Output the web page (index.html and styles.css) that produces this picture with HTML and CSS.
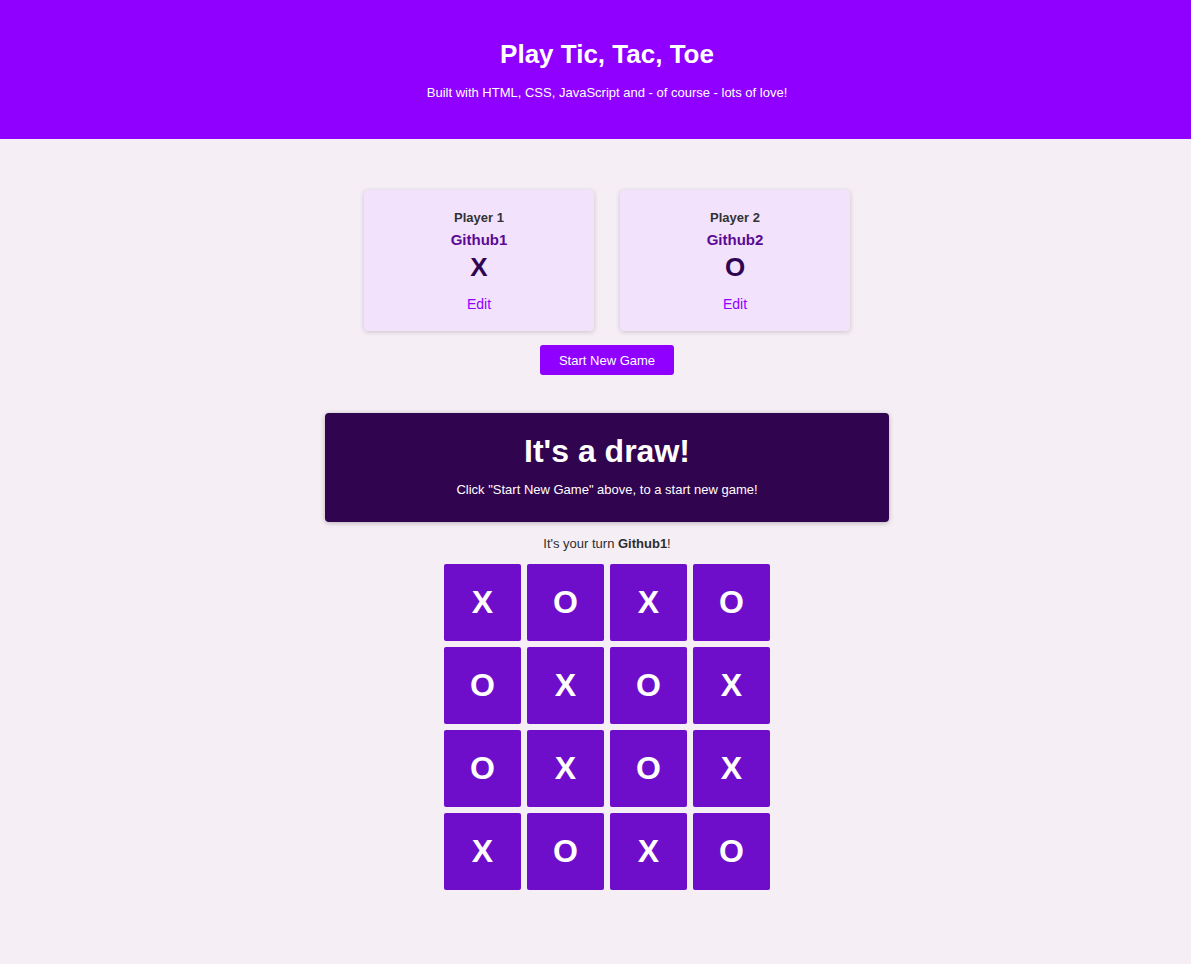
FILE: index.html
```html
<!DOCTYPE html>
<html lang="en">
<head>
<meta charset="utf-8">
<title>Tic Tac Toe</title>
<link rel="stylesheet" href="styles.css">
</head>
<body>
<header class="hero">
  <div class="hero-inner">
    <h1>Play Tic, Tac, Toe</h1>
    <p>Built with HTML, CSS, JavaScript and - of course - lots of love!</p>
  </div>
</header>
<main class="main">
  <section class="players">
    <ol class="player-list">
      <li class="player">
        <h2>Player 1</h2>
        <h3>Github1</h3>
        <p class="symbol">X</p>
        <button class="edit">Edit</button>
      </li>
      <li class="player">
        <h2>Player 2</h2>
        <h3>Github2</h3>
        <p class="symbol">O</p>
        <button class="edit">Edit</button>
      </li>
    </ol>
    <button class="start">Start New Game</button>
  </section>
  <section class="game">
    <article class="game-over">
      <h2>It's a draw!</h2>
      <p>Click "Start New Game" above, to a start new game!</p>
    </article>
    <p class="turn">It's your turn <strong>Github1</strong>!</p>
    <ol class="board">
      <li>X</li><li>O</li><li>X</li><li>O</li>
      <li>O</li><li>X</li><li>O</li><li>X</li>
      <li>O</li><li>X</li><li>O</li><li>X</li>
      <li>X</li><li>O</li><li>X</li><li>O</li>
    </ol>
  </section>
</main>
</body>
</html>
```
FILE: styles.css
```css
* { box-sizing: border-box; }
body {
  margin: 0;
  font-family: "Liberation Sans", Arial, sans-serif;
  background: #f5eef5;
  color: #2d2d2d;
}
.hero {
  background: #8f00ff;
  color: #fff;
  height: 139px;
  padding-left: 23px;
}
.hero-inner {
  text-align: center;
  padding-top: 39px;
}
.hero h1 {
  margin: 0;
  font-size: 26px;
  line-height: 30px;
  font-weight: bold;
}
.hero p {
  margin: 16px 0 0;
  font-size: 13px;
  line-height: 16px;
}
.main {
  padding-left: 23px;
  padding-top: 51px;
}
.players {
  display: flex;
  flex-direction: column;
  align-items: center;
}
.player-list {
  list-style: none;
  margin: 0;
  padding: 0;
  display: flex;
  gap: 26px;
}
.player {
  width: 230px;
  height: 141px;
  background: #f2e2fc;
  border-radius: 4px;
  box-shadow: 0 1px 5px rgba(0, 0, 0, 0.18);
  text-align: center;
  padding-top: 20px;
}
.player h2 {
  margin: 0;
  font-size: 13px;
  line-height: 16px;
  font-weight: bold;
  color: #333;
}
.player h3 {
  margin: 5px 0 0;
  font-size: 15px;
  line-height: 18px;
  font-weight: bold;
  color: #5a0a96;
}
.symbol {
  margin: 3px 0 0;
  font-size: 26px;
  line-height: 30px;
  font-weight: bold;
  color: #2f0553;
}
.edit {
  margin-top: 14px;
  font-family: inherit;
  font-size: 14px;
  line-height: 16px;
  color: #8f00ff;
  background: none;
  border: none;
  padding: 0;
}
.start {
  margin-top: 14px;
  width: 134px;
  height: 30px;
  background: #8f00ff;
  color: #fff;
  border: none;
  border-radius: 3px;
  font-family: inherit;
  font-size: 13px;
}
.game {
  display: flex;
  flex-direction: column;
  align-items: center;
  margin-top: 38px;
}
.game-over {
  width: 564px;
  height: 109px;
  background: #31044f;
  color: #fff;
  border-radius: 4px;
  box-shadow: 0 1px 5px rgba(0, 0, 0, 0.25);
  text-align: center;
  padding-top: 20px;
}
.game-over h2 {
  margin: 0;
  font-size: 32px;
  line-height: 36px;
  font-weight: bold;
}
.game-over p {
  margin: 13px 0 0;
  font-size: 13px;
  line-height: 16px;
}
.turn {
  margin: 14px 0 0;
  font-size: 13px;
  line-height: 16px;
}
.board {
  list-style: none;
  margin: 12px 0 0;
  padding: 0;
  display: grid;
  grid-template-columns: repeat(4, 77px);
  grid-auto-rows: 77px;
  gap: 6px;
}
.board li {
  background: #6e0ecb;
  border-radius: 2px;
  color: #fff;
  font-size: 32px;
  font-weight: bold;
  display: flex;
  align-items: center;
  justify-content: center;
}
```
